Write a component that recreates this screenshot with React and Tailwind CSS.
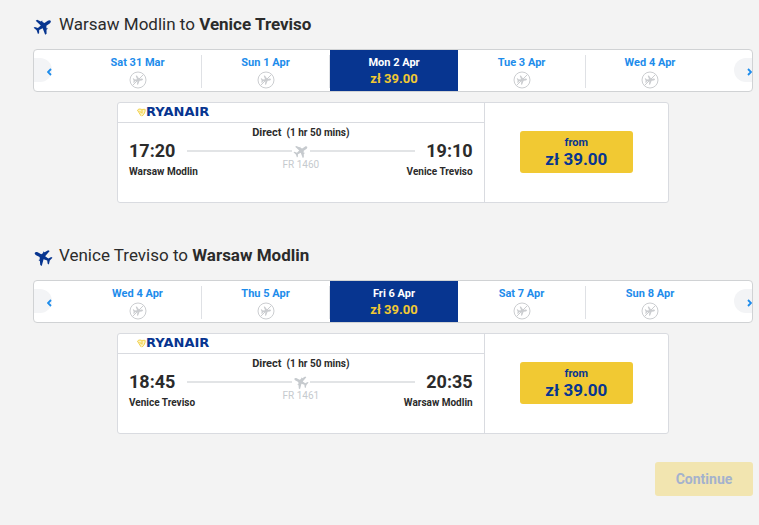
import React, { useState } from "react";

const TRIPS = [
  {
    from: "Warsaw Modlin",
    to: "Venice Treviso",
    departure: "17:20",
    arrival: "19:10",
    duration: "(1 hr 50 mins)",
    flight: "FR 1460",
    price: "zł 39.00",
    days: ["Sat 31 Mar", "Sun 1 Apr", "Mon 2 Apr", "Tue 3 Apr", "Wed 4 Apr"],
  },
  {
    from: "Venice Treviso",
    to: "Warsaw Modlin",
    departure: "18:45",
    arrival: "20:35",
    duration: "(1 hr 50 mins)",
    flight: "FR 1461",
    price: "zł 39.00",
    inbound: true,
    days: ["Wed 4 Apr", "Thu 5 Apr", "Fri 6 Apr", "Sat 7 Apr", "Sun 8 Apr"],
  },
];

// plane seen from above, nose up
const PLANE =
  "M12 0c1.200 0 2.200 1.300 2.200 3v5.200l3 1.900V9h1.300v1.900L23 13.800v2.200l-8.800-2-.7 5L17 21.500v1.800L12 22l-5 1.300v-1.800l3.500-2.500-.7-5-8.800 2v-2.200l4.500-2.900V9h1.300v1.100l3-1.900V3c0-1.700 1-3 2.200-3z";

const PlaneIcon = ({ angle, className }) => (
  <svg viewBox="-1 -1 26 26" fill="currentColor" className={className} aria-hidden="true">
    <path d={PLANE} transform={`rotate(${angle} 12 12)`} />
  </svg>
);

const NoFlightIcon = () => (
  <svg viewBox="0 0 18 18" className="size-[18px] shrink-0 text-[#cbcdd0]" role="img" aria-label="No flights">
    <circle cx="9" cy="9" r="8" fill="none" stroke="currentColor" />
    <path
      d="M14 9c0 .6-.6.900-1.300.9h-2.200L8.500 13.500H7.300l.9-3.600H6l-1.200 1.400H4L4.600 9 4 6.700h.8L6 8.100h2.200l-.9-3.600h1.200l2 3.600h2.200c.7 0 1.300.3 1.300.9z"
      fill="currentColor"
      transform="rotate(-8 9 9)"
    />
    <path d="M3.400 14.600 14.600 3.400" stroke="currentColor" />
  </svg>
);

const Harp = () => (
  <svg viewBox="0 0 9 9" className="size-[9px]" aria-hidden="true">
    <path d="M.5 2C1 .5 3 .6 4.500 1 6 .3 8 .6 8.400 1.800 8.600 4 7 6.500 5 8.300 4 8.300 3.500 7.500 3.300 6.300Z" fill="#fbf3c4" />
    <path
      d="M.5 2.200C1.500.8 3 1 4.500 1.400S7.500 1 8.200 1.500C8.300 4 7 6.500 5 8.200M.5 2.200 4 7.800M2.500 3 5 5.500M5 2v3"
      fill="none"
      stroke="#f1c933"
      strokeWidth=".9"
    />
  </svg>
);

const Logo = () => (
  <div className="flex h-5 items-center border-b border-[#d9dbe0] pb-px pl-[19px]">
    <Harp />
    <span className="font-['DejaVu_Sans',sans-serif] text-[13px] leading-4 font-bold text-[#073590]">
      RYANAIR
    </span>
  </div>
);

const Arrow = ({ next, onClick }) => (
  <div className={`flex shrink-0 items-center pb-[2px] ${next ? "w-[38px] justify-end" : "w-10"}`}>
    <button
      type="button"
      onClick={onClick}
      aria-label={next ? "Next days" : "Previous days"}
      className={`flex h-6 w-[18px] items-center justify-end bg-[#f3f4f6] pt-1 text-[#1d8ceb] ${
        next ? "rounded-l-full" : "rounded-r-full"
      }`}
    >
      <svg viewBox="0 0 5 8" className="h-2 w-[5px]" fill="none" stroke="currentColor" strokeWidth="1.8">
        <path d={next ? "M1 1 4 4 1 7" : "M4 1 1 4 4 7"} />
      </svg>
    </button>
  </div>
);

const DayPicker = ({ days, price }) => {
  const [selected, setSelected] = useState(2);

  return (
    <div className="flex h-[43px] overflow-hidden rounded border border-[#d0d2d4] bg-white">
      <Arrow />
      <div className="grid flex-1 grid-cols-5">
        {days.map((day, i) => (
          <button
            key={day}
            type="button"
            onClick={() => setSelected(i)}
            className={`flex flex-col items-center text-[11px] leading-4 font-bold ${
              selected === i ? "bg-[#073590] text-white" : "text-[#1d8ceb]"
            }`}
          >
            <span
              className={`mt-[5px] flex h-[33px] w-full flex-col items-center ${
                i < 4 && selected !== i ? "border-r border-[#dfe1e5]" : ""
              }`}
            >
              {day}
              {selected === i ? (
                <span className="text-[13px] text-[#f1c933]">{price}</span>
              ) : (
                <NoFlightIcon />
              )}
            </span>
          </button>
        ))}
      </div>
      <Arrow next />
    </div>
  );
};

const FlightCard = ({ trip, angle }) => (
  <div className="mx-[84px] mt-[10px] flex rounded-[3px] border border-[#d9dbe0] bg-white">
    <div className="w-2/3 border-r border-[#d9dbe0]">
      <Logo />
      <div className="flex gap-3 px-[11px] pb-[21px] text-[10px] leading-[18px] font-bold whitespace-nowrap">
        <div className="flex w-[46px] flex-col items-start pt-4">
          <span className="text-[18px] leading-6">{trip.departure}</span>
          <span>{trip.from}</span>
        </div>
        <div className="flex flex-1 flex-col pt-1">
          <div className="flex justify-center gap-[5px] leading-3">
            <span className="text-[11px]">Direct</span>
            <span>{trip.duration}</span>
          </div>
          <div className="mt-1 flex h-4 items-center gap-px text-[#c6cace]">
            <span className="h-[2px] flex-1 bg-[#e2e4e6]" />
            <PlaneIcon angle={angle} className="size-4" />
            <span className="h-[2px] flex-1 bg-[#e2e4e6]" />
          </div>
          <span className="text-center leading-3 font-normal text-[#c6cace]">{trip.flight}</span>
        </div>
        <div className="flex w-[46px] flex-col items-end pt-4">
          <span className="text-[18px] leading-6">{trip.arrival}</span>
          <span>{trip.to}</span>
        </div>
      </div>
    </div>
    <div className="flex flex-1 items-center justify-center pb-[2px]">
      <button
        type="button"
        className="flex h-[42px] w-[113px] flex-col items-center justify-center rounded-[3px] bg-[#f1c933] pb-[2px] font-bold text-[#073590]"
      >
        <span className="text-[11px] leading-4">from</span>
        <span className="text-[17px] leading-4">{trip.price}</span>
      </button>
    </div>
  </div>
);

const Trip = ({ trip }) => {
  const angle = trip.inbound ? -62 : 56;

  return (
    <section>
      <h2 className="mb-[13px] flex h-6 items-end gap-[6px] text-[17px] leading-6">
        <PlaneIcon angle={angle} className="size-5 text-[#073590]" />
        <span>
          {trip.from} to <b>{trip.to}</b>
        </span>
      </h2>
      <DayPicker days={trip.days} price={trip.price} />
      <FlightCard trip={trip} angle={angle} />
    </section>
  );
};

const App = () => (
  <main className="min-h-screen bg-[#f3f3f3] pt-3 pr-[6px] pb-6 pl-[33px] font-[Roboto,sans-serif] text-[#2b2b2b]">
    <div className="flex flex-col gap-10">
      {TRIPS.map((trip) => (
        <Trip key={trip.flight} trip={trip} />
      ))}
    </div>
    <div className="mt-7 flex justify-end">
      <button
        type="button"
        disabled
        className="h-[34px] w-[98px] rounded-[3px] bg-[#f2e5b0] text-[14px] font-bold text-[#a4b2cd]"
      >
        Continue
      </button>
    </div>
  </main>
);

export default App;
